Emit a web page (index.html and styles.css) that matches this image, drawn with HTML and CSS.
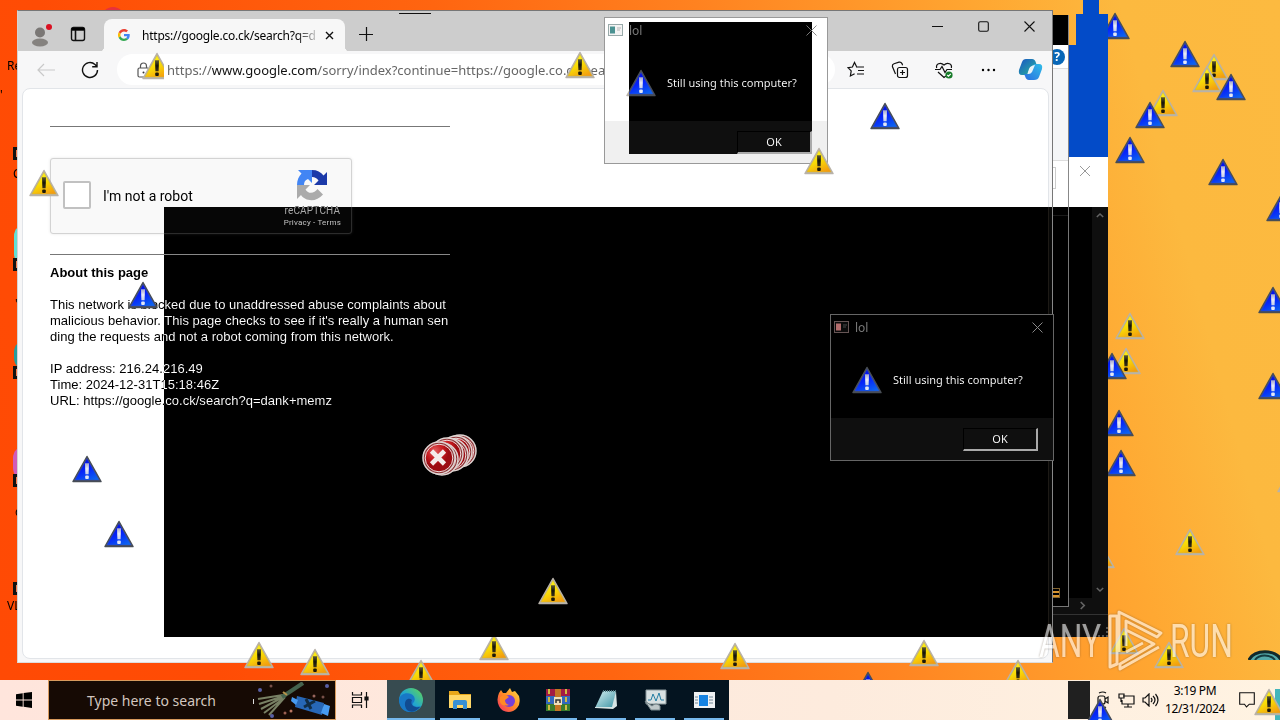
FILE: index.html
```html
<!DOCTYPE html>
<html lang="en">
<head>
  <meta charset="UTF-8" />
  <title>Desktop</title>
  <link rel="stylesheet" href="styles.css">
</head>
<body>
  <svg width="0" height="0" class="defs">
    <defs>
      <linearGradient id="gold" x1=".3" y1="0" x2=".8" y2="1">
        <stop offset="0" stop-color="#fff81c"/><stop offset=".5" stop-color="#f8d806"/><stop offset="1" stop-color="#f39a10"/>
      </linearGradient>
      <linearGradient id="mark" x1="0" y1="0" x2="0" y2="1">
        <stop offset="0" stop-color="#5e5a30"/><stop offset=".5" stop-color="#15130a"/><stop offset="1" stop-color="#383018"/>
      </linearGradient>
      <radialGradient id="red" cx=".35" cy=".25"><stop offset="0" stop-color="#e06060"/><stop offset=".6" stop-color="#c71b20"/><stop offset="1" stop-color="#9d0c12"/></radialGradient>
      <linearGradient id="edgeg" x1="0" y1="1" x2="1" y2="0"><stop offset="0" stop-color="#126dc5"/><stop offset=".5" stop-color="#22a7ce"/><stop offset="1" stop-color="#65d94b"/></linearGradient>
      <linearGradient id="fox" x1="1" y1="0" x2="0" y2="1"><stop offset="0" stop-color="#ffe14a"/><stop offset=".5" stop-color="#ff8a26"/><stop offset="1" stop-color="#f42b68"/></linearGradient>
      <linearGradient id="cop" x1="0" y1="0" x2="1" y2="1"><stop offset="0" stop-color="#1b55c4"/><stop offset="1" stop-color="#28b99c"/></linearGradient>
      <linearGradient id="cop2" x1="0" y1="1" x2="1" y2="0"><stop offset="0" stop-color="#2b6de0"/><stop offset="1" stop-color="#30bde8"/></linearGradient>
      <linearGradient id="note" x1="0" y1="0" x2="1" y2="1"><stop offset="0" stop-color="#d8f1f2"/><stop offset="1" stop-color="#3b93a4"/></linearGradient>
      <symbol id="warn" viewBox="0 0 30 28">
        <path d="M15 1.500 29 26.500H1Z" fill="#bdb6a8" stroke="#b8b2aa" stroke-width="1.500" stroke-linejoin="round"/>
        <path d="M15 3.500 27.200 25H2.800Z" fill="url(#gold)" stroke="#c9b04e" stroke-width=".5"/>
        <path d="M13 8.300h4l-.4 10.900h-3.200Z" fill="url(#mark)"/>
        <rect x="13.200" y="20.500" width="3.600" height="3.400" rx="1" fill="#1c180a"/>
      </symbol>
      <symbol id="error" viewBox="0 0 34 34">
        <circle cx="17" cy="17" r="16" fill="#8c3436" stroke="#dfd4d2" stroke-width="1.500"/>
        <circle cx="17" cy="17" r="13.800" fill="url(#red)" stroke="#f0dcdc" stroke-width="1"/>
        <path d="m9.500 10 13 13M22.500 10l-13 13" stroke="#f4eceb" stroke-width="4.600"/>
      </symbol>
    </defs>
  </svg>

  <div class="desktop">
    <!-- desktop icons peeking out on the left -->
    <i class="blob pink" style="left:101px;top:7px"></i>
    <i class="blob cyan" style="left:14px;top:224px"></i>
    <i class="blob teal" style="left:14px;top:340px"></i>
    <i class="blob violet" style="left:13px;top:446px"></i>
    <i class="shortcut" style="left:13px;top:147px"></i>
    <i class="shortcut" style="left:13px;top:258px"></i>
    <i class="shortcut" style="left:13px;top:366px"></i>
    <i class="shortcut" style="left:13px;top:474px"></i>
    <i class="shortcut" style="left:13px;top:582px"></i>
    <span class="icon-label" style="left:7px;top:58px">Re</span>
    <span class="icon-label" style="left:0px;top:87px">'</span>
    <span class="icon-label" style="left:13px;top:166px">C</span>
    <span class="icon-label" style="left:15px;top:296px">'</span>
    <span class="icon-label" style="left:15px;top:504px">c</span>
    <span class="icon-label" style="left:7px;top:598px">VL</span>

    <svg class="warn blue" style="left:1100px;top:12px"><use href="#warn"/></svg>
    <svg class="warn" style="left:1111px;top:347px"><use href="#warn"/></svg>
    <svg class="warn blue" style="left:1097px;top:352px"><use href="#warn"/></svg>
    <svg class="warn blue" style="left:1104px;top:409px"><use href="#warn"/></svg>
    <svg class="warn blue" style="left:1106px;top:449px"><use href="#warn"/></svg>
    <svg class="warn" style="left:1085px;top:541px"><use href="#warn"/></svg>
    <svg class="warn blue" style="left:853px;top:671px"><use href="#warn"/></svg>
    <svg class="bin" style="left:1248px;top:650px" width="34" height="10"><path d="M1 10C5-1 29-1 33 10" fill="#54a9a9" stroke="#10292c" stroke-width="3"/><path d="M7 10c4-6 15-6 20 0" fill="none" stroke="#143b40" stroke-width="2"/></svg>

    <div class="trail t1"></div>
    <div class="trail t2"></div>
    <div class="trail t3"></div>

    <div class="window listing">
      <svg class="close" width="12" height="12" viewBox="0 0 12 12"><path d="m1 1 10 10M11 1 1 11" stroke="#999" fill="none"/></svg>
      <div class="scroll-v">
        <svg width="8" height="7" viewBox="0 0 10 8"><path d="m1 6 4-4 4 4" stroke="#9b9b9b" stroke-width="1.800" fill="none"/></svg>
        <svg width="8" height="7" viewBox="0 0 10 8"><path d="m1 2 4 4 4-4" stroke="#9b9b9b" stroke-width="1.800" fill="none"/></svg>
      </div>
      <div class="scroll-h"><svg width="7" height="9" viewBox="0 0 8 10"><path d="m2 1 4 4-4 4" stroke="#9b9b9b" stroke-width="1.800" fill="none"/></svg></div>
      <div class="grip"></div>
    </div>

    <div class="window explorer">
      <div class="explorer-title"></div>
      <div class="explorer-menu"><span class="help">?</span></div>
      <div class="explorer-ribbon"></div>
      <div class="explorer-address"><i></i></div>
      <div class="explorer-body"></div>
      <i class="view-icon"></i>
    </div>

    <div class="window browser">
      <div class="tabs">
        <svg class="profile" width="24" height="24" viewBox="0 0 24 24"><circle cx="11" cy="9.500" r="5" fill="#7a7775"/><ellipse cx="11" cy="19.500" rx="8" ry="4" fill="#85827f"/><circle cx="20" cy="4" r="3" fill="#da1021"/></svg>
        <svg class="workspace" width="16" height="16" viewBox="0 0 16 16"><rect x="1.500" y="1.500" width="13" height="13" rx="2" fill="none" stroke="#111" stroke-width="1.400"/><path d="M1.500 4h13M5.500 4v10" stroke="#111" stroke-width="1.600"/><path d="M2 2h12v2H2z"/></svg>
        <div class="tab">
          <svg width="12" height="12" viewBox="0 0 48 48"><path fill="#EA4335" d="M24 9.500c3.500 0 6.700 1.200 9.200 3.600l6.900-6.900C35.900 2.400 30.500 0 24 0 14.600 0 6.500 5.400 2.600 13.200l8 6.200C12.400 13.700 17.700 9.500 24 9.500z"/><path fill="#4285F4" d="M47 24.500c0-1.600-.2-3.100-.4-4.500H24v9h12.900c-.6 3-2.300 5.500-4.800 7.200l7.700 6C44.400 38 47 31.800 47 24.500z"/><path fill="#FBBC05" d="M10.500 28.600a14 14 0 0 1 0-9.200l-8-6.200a24 24 0 0 0 0 21.600z"/><path fill="#34A853" d="M24 48c6.500 0 11.900-2.100 15.900-5.800l-7.700-6c-2.200 1.500-5 2.300-8.200 2.300-6.300 0-11.600-4.200-13.500-9.900l-8 6.200C6.500 42.600 14.600 48 24 48z"/></svg>
          <span class="tab-title">https://google.co.ck/search?q=d</span>
          <svg width="9" height="9" viewBox="0 0 9 9"><path d="m1 1 7 7M8 1 1 8" stroke="#111" stroke-width="1.400"/></svg>
        </div>
        <svg class="new-tab" width="14" height="14" viewBox="0 0 14 14"><path d="M7.500 0v14M0 7.500h14" stroke="#111" stroke-width="1.200"/></svg>
        <div class="controls">
          <svg width="11" height="11" viewBox="0 0 11 11"><path d="M0 5.500h11" stroke="#111"/></svg>
          <svg width="11" height="11" viewBox="0 0 11 11"><rect x=".7" y=".7" width="9.600" height="9.600" rx="1.500" fill="none" stroke="#111" stroke-width="1.100"/></svg>
          <svg width="11" height="11" viewBox="0 0 11 11"><path d="m.5.500 10 10m0-10-10 10" stroke="#111" stroke-width="1.100"/></svg>
        </div>
      </div>
      <div class="toolbar">
        <svg class="back" width="18" height="14" viewBox="0 0 18 14"><path d="M18 7H1m6-6L1 7l6 6" fill="none" stroke="#c9c9c9" stroke-width="1.200"/></svg>
        <svg class="reload" width="18" height="18" viewBox="0 0 18 18"><path d="M16.500 9a7.500 7.500 0 1 1-2.500-5.600L16 5.500M16 1v4.800h-4.800" fill="none" stroke="#111" stroke-width="1.400"/></svg>
        <div class="address">
          <svg width="13" height="16" viewBox="0 0 13 16"><rect x="1" y="6" width="11" height="9" rx="1.500" fill="none" stroke="#555" stroke-width="1.200"/><path d="M3.500 6V4a3 3 0 0 1 6 0v2" fill="none" stroke="#555" stroke-width="1.200"/><circle cx="6.500" cy="10.500" r="1" fill="#333"/></svg>
          <span class="url">https://<b>www.google.com</b>/sorry/index?continue=https://google.co.ck/search</span>
        </div>
        <div class="actions">
          <svg width="18" height="18" viewBox="0 0 18 18" fill="none" stroke="#111" stroke-width="1.200"><path d="M9.500 5.500 7.500 1.500 5.400 6 1 6.700l3.200 3.200L3.400 15l4.200-2.300M9 6h8M11 9.500h6M10 13h7"/></svg>
          <svg width="18" height="18" viewBox="0 0 18 18" fill="none" stroke="#111" stroke-width="1.200"><rect x="6.500" y="6.500" width="10" height="10" rx="2"/><path d="M11.500 9v5M9 11.500h5M4.500 13 1.400 5.500Q1 3.500 3 2.700L8 1.200q2-.5 3 1.400l.6 1.600"/></svg>
          <svg width="18" height="18" viewBox="0 0 18 18" fill="none" stroke="#111" stroke-width="1.200"><path d="M1.700 7C.5 3 5.500.5 9 4c3.500-3.500 8.500-1 7.300 3M0 8.500h5l2-3 3 6 2-3h5M3 11l6 5.500 2-1.500"/><circle cx="14" cy="14" r="3.600" fill="#187c2a" stroke="none"/><path d="m12.300 14 1.200 1.200 2.300-2.300" stroke="#fff"/></svg>
          <svg width="18" height="18" viewBox="0 0 18 18"><circle cx="4" cy="9" r="1.200"/><circle cx="9.500" cy="9" r="1.200"/><circle cx="15" cy="9" r="1.200"/></svg>
          <svg class="copilot" width="25" height="23" viewBox="0 0 25 23"><path d="M8 1h6q3 0 4 4l1 3h-4q-3 0-4 3l-2 6H4Q0 17 1 12L4 4q1-3 4-3Z" fill="url(#cop)"/><path d="M17 22h-6q-3 0-4-4l-1-2h3q3 0 4-3l3-7h5q4 0 3 5l-3 8q-1 3-5 3Z" fill="url(#cop2)"/><path d="m10 15 3-6q1-2 4-2l-3 7q-1 2-4 2Z" fill="#e9f4f8"/></svg>
        </div>
      </div>
      <div class="page">
        <hr>
        <div class="captcha">
          <span class="checkbox"></span>
          <span class="robot">I'm not a robot</span>
          <div class="brand">
            <svg width="32" height="32" viewBox="0 0 32 32"><path d="M16 1c5 0 9 2 11.500 5.500L31 3v13H18l4.500-4.500C21 9.500 19 8 16 8Z" fill="#1c3aa9"/><path d="M1 16C1 11 3 7 5.500 4.500L2 1h14v13l-4-4c-3 1-4 3-4 6Z" fill="#4285f4"/><path d="M1 16h13l-4.500 4.500c3 5 9 4 12-.5l5.500 5.500C20 34 9 32 5 26l-4 4Z" fill="#ababab"/></svg>
            <span class="brand-name">reCAPTCHA</span>
            <span class="brand-links">Privacy - Terms</span>
          </div>
        </div>
        <hr>
        <h4>About this page</h4>
        <p>This network is blocked due to unaddressed abuse complaints about<br>malicious behavior. This page checks to see if it's really a human sen<br>ding the requests and not a robot coming from this network.</p>
        <p class="details">IP address: 216.24.216.49<br>Time: 2024-12-31T15:18:46Z<br>URL: https://google.co.ck/search?q=dank+memz</p>
      </div>
    </div>
    <div class="streak"></div>

    <div class="dialog second">
      <div class="dialog-title">
        <svg width="15" height="12" viewBox="0 0 15 12"><rect x=".5" y=".5" width="14" height="11" fill="#f4f4f4" stroke="#9aa"/><rect x="2" y="2.500" width="5" height="7" fill="#4b9292"/><path d="M9 4h4M9 6h3" stroke="#b5b5b5"/></svg>
        <span>lol</span>
        <svg width="11" height="11" viewBox="0 0 11 11"><path d="m.5.500 10 10m0-10-10 10" stroke="#777"/></svg>
      </div>
      <div class="dialog-body"><svg width="30" height="28"><use href="#warn"/></svg><span>Still using this computer?</span></div>
      <div class="dialog-foot"><span class="ok">OK</span></div>
    </div>

    <div class="invert big"></div>

    <div class="dialog first">
      <div class="dialog-title">
        <svg width="15" height="12" viewBox="0 0 15 12"><rect x=".5" y=".5" width="14" height="11" fill="#f4f4f4" stroke="#9aa"/><rect x="2" y="2.500" width="5" height="7" fill="#4b9292"/><path d="M9 4h4M9 6h3" stroke="#b5b5b5"/></svg>
        <span>lol</span>
        <svg width="11" height="11" viewBox="0 0 11 11"><path d="m.5.500 10 10m0-10-10 10" stroke="#888"/></svg>
      </div>
      <div class="dialog-body"><svg width="30" height="28"><use href="#warn"/></svg><span>Still using this computer?</span></div>
      <div class="dialog-foot"><span class="ok">OK</span></div>
    </div>
    <div class="invert small"></div>

    <!-- icon trail left on the screen -->
    <svg class="warn cut-right" style="left:142px;top:52px"><use href="#warn"/></svg>
    <svg class="warn" style="left:29px;top:169px"><use href="#warn"/></svg>
    <svg class="warn" style="left:565px;top:51px"><use href="#warn"/></svg>
    <svg class="warn" style="left:804px;top:147px"><use href="#warn"/></svg>
    <svg class="warn" style="left:538px;top:577px"><use href="#warn"/></svg>
    <svg class="warn" style="left:244px;top:641px"><use href="#warn"/></svg>
    <svg class="warn" style="left:300px;top:648px"><use href="#warn"/></svg>
    <svg class="warn" style="left:406px;top:659px"><use href="#warn"/></svg>
    <svg class="warn cut-top" style="left:479px;top:633px"><use href="#warn"/></svg>
    <svg class="warn" style="left:720px;top:642px"><use href="#warn"/></svg>
    <svg class="warn" style="left:909px;top:639px"><use href="#warn"/></svg>
    <svg class="warn" style="left:1003px;top:659px"><use href="#warn"/></svg>
    <svg class="warn" style="left:1199px;top:53px"><use href="#warn"/></svg>
    <svg class="warn" style="left:1192px;top:65px"><use href="#warn"/></svg>
    <svg class="warn" style="left:1148px;top:89px"><use href="#warn"/></svg>
    <svg class="warn" style="left:1115px;top:312px"><use href="#warn"/></svg>
    <svg class="warn" style="left:1175px;top:528px"><use href="#warn"/></svg>
    <svg class="warn" style="left:1277px;top:465px"><use href="#warn"/></svg>
    <svg class="warn" style="left:1109px;top:627px"><use href="#warn"/></svg>
    <svg class="warn" style="left:1154px;top:641px"><use href="#warn"/></svg>
    <svg class="warn blue" style="left:870px;top:102px"><use href="#warn"/></svg>
    <svg class="warn blue" style="left:1170px;top:40px"><use href="#warn"/></svg>
    <svg class="warn blue" style="left:1216px;top:73px"><use href="#warn"/></svg>
    <svg class="warn blue" style="left:1135px;top:101px"><use href="#warn"/></svg>
    <svg class="warn blue" style="left:1115px;top:136px"><use href="#warn"/></svg>
    <svg class="warn blue" style="left:1208px;top:158px"><use href="#warn"/></svg>
    <svg class="warn blue" style="left:1266px;top:194px"><use href="#warn"/></svg>
    <svg class="warn blue" style="left:1258px;top:286px"><use href="#warn"/></svg>
    <svg class="warn blue" style="left:1258px;top:372px"><use href="#warn"/></svg>
    <svg class="warn blue" style="left:128px;top:281px"><use href="#warn"/></svg>
    <svg class="warn blue" style="left:72px;top:455px"><use href="#warn"/></svg>
    <svg class="warn blue" style="left:104px;top:520px"><use href="#warn"/></svg>

    <svg class="error" style="left:443px;top:433px"><use href="#error"/></svg>
    <svg class="error" style="left:439px;top:434px"><use href="#error"/></svg>
    <svg class="error" style="left:435px;top:437px"><use href="#error"/></svg>
    <svg class="error" style="left:430px;top:436px"><use href="#error"/></svg>
    <svg class="error" style="left:425px;top:441px"><use href="#error"/></svg>
    <svg class="error" style="left:422px;top:440px"><use href="#error"/></svg>

    <div class="watermark">
      <span>ANY</span>
      <svg width="58" height="64" viewBox="0 0 58 64" fill="none" stroke="#fff" stroke-width="3" stroke-linejoin="round"><path d="M12 43V3l42 21-4 4L19 12v25M19 34V21l28 14-34 20v5l39-22M3 7v51l7-3V7ZM19 43l17-9"/></svg>
      <span>RUN</span>
    </div>
  </div>

  <div class="taskbar">
    <svg class="start" width="16" height="16" viewBox="0 0 16 16"><path d="M0 2.300 6.700 1.300v6.300H0ZM7.600 1.100 16 0v7.600H7.600ZM0 8.500h6.700v6.300L0 13.800ZM7.600 8.500H16V16l-8.400-1.200Z"/></svg>
    <div class="search">
      <span>Type here to search</span>
      <svg width="82" height="36" viewBox="0 0 82 36">
        <path d="M1.500 17v5" stroke="#ddd"/>
        <g stroke="#788064" stroke-width="2"><path d="M6 17 31 13M7 22l25-8M9 27l22-12M12 31l20-15M17 33l16-18"/><path d="M30 15 51 1" stroke="#45634e" stroke-width="4"/><path d="m35 13-4-3" stroke="#b69349"/></g>
        <path d="m45 14 27 7-2 12-27-8Z" fill="#2767b6"/><path d="m40 15 6 3-2 5-5-4ZM72 22l6 2-2 10-7-3Z" fill="#489bf0"/><path d="m54 17 5 10m4-8-11 6" stroke="#112d46" stroke-width="3"/>
        <g fill="#5960a5"><circle cx="8" cy="8" r="2"/><circle cx="75" cy="4" r="2"/><circle cx="20" cy="34" r="2"/><circle cx="33" cy="31" r="1.500" fill="#9b6053"/><circle cx="19" cy="4" r="1.500" fill="#775048"/><circle cx="62" cy="14" r="1.500" fill="#98665e"/><circle cx="71" cy="15" r="1.500" fill="#775048"/><circle cx="39" cy="29" r="1.500" fill="#b97762"/></g>
      </svg>
    </div>
    <svg class="taskview" width="18" height="18" viewBox="0 0 18 18" fill="none" stroke="#111" stroke-width="1.200"><path d="M1.500 1v3h9V1M1.500 17v-3h9v3M1.500 6.500h9v5h-9ZM15.500 1v16"/><path d="M14 6h3v3h-3z" fill="#111"/></svg>
    <div class="apps">
      <span class="app active"><svg width="24" height="24" viewBox="0 0 24 24"><circle cx="12" cy="12" r="12" fill="url(#edgeg)"/><path d="M0 12C1 6 7 4 12 6c4 2 5 6 2 9-2 3 3 5 8 3-5 8-18 8-21-1Z" fill="#1878c7"/><path d="M8 22c-5-7 0-14 5-10-2 4 1 8 8 7-4 5-9 6-13 3Z" fill="#114b91"/></svg></span>
      <span class="app open"><svg width="22" height="20" viewBox="0 0 22 20"><path d="M0 1h9l2 3h11v14H0Z" fill="#e8a71b"/><path d="M0 5h22v13H0Z" fill="#ffd768"/><path d="M4 19v-7q0-2 2-2h10q2 0 2 2v7h-4v-4H8v4Z" fill="#3790d5"/></svg></span>
      <span class="app"><svg width="24" height="24" viewBox="0 0 24 24"><path d="M2 5l2-3 2 3 3 0 4-5 2 4 3-1 4 5q2 8-2 12c-5 6-15 5-18-2Q-1 12 2 5Z" fill="url(#fox)"/><circle cx="12" cy="13" r="6" fill="#7540d8"/><path d="M3 9q5-4 9 0l-4 3q0 4 4 5-7 2-9-3Z" fill="#ff8a25"/></svg></span>
      <span class="app open"><svg width="24" height="22" viewBox="0 0 24 22"><path d="M0 0h24v7H0Z" fill="#a31b43"/><path d="M0 7h24v8H0Z" fill="#3268bd"/><path d="M0 15h24v7H0Z" fill="#397c2d"/><path d="M3 0v22M20 0v22" stroke="#d0bc43" stroke-width="2" stroke-dasharray="5 3"/><path d="M9 0h6v22H9Z" fill="#c37524"/><rect x="8" y="8" width="8" height="8" fill="#eee0bb"/><path d="M10 14v-3h4v3" fill="none" stroke="#333" stroke-width="1.500"/></svg></span>
      <span class="app open"><svg width="24" height="22" viewBox="0 0 24 22"><path d="M9 2h13l-3 17H1Z" fill="url(#note)"/><path d="m22 2 1 15-4 3L1 19v-1h17Z" fill="#d7e5e5"/><path d="M9 2h13" stroke="#557c82" stroke-width="2" stroke-dasharray="1 1"/></svg></span>
      <span class="app open"><svg width="23" height="22" viewBox="0 0 23 22"><path d="M2 1h20v14H2Z" fill="#d8e1e2" stroke="#8a979b"/><path d="M4 11h3l2-6 3 7 3-8 2 7h3" fill="none" stroke="#267fa3"/><path d="m1 12 7 5q4-4 8 0v4H7Z" fill="#bfc8c9" stroke="#77878b"/></svg></span>
      <span class="app open"><svg width="21" height="16" viewBox="0 0 21 16"><rect width="21" height="16" fill="#eef1f3"/><rect x="5" y="3" width="9" height="11" fill="#1683e2"/><path d="M1 5h3M1 8h3M1 11h3M15 5h4M15 8h4M15 11h4" stroke="#718796"/></svg></span>
    </div>
    <div class="tray">
      <span class="patch"></span>
      <svg class="meet" width="13" height="18" viewBox="0 0 13 18" fill="none" stroke="#111" stroke-width="1.200"><rect x="1" y="5" width="7" height="8" rx="2"/><path d="m8 8 3-2v6l-3-2M2 2q4-2 7 0M2 16q4 2 7 0"/></svg>
      <svg class="net" width="17" height="15" viewBox="0 0 17 15" fill="none" stroke="#111" stroke-width="1.200"><path d="M5 3h11v8H4V7M10 11v3M6 14h8M1 1h5v4H1ZM3 5v4"/></svg>
      <svg class="sound" width="17" height="14" viewBox="0 0 17 14" fill="none" stroke="#111" stroke-width="1.200"><path d="M1 5v4h2l4 4V1L3 5ZM9 5q2 2 0 4M11 3q4 4 0 8M13.500 1q5 6 0 12"/></svg>
      <div class="clock"><span>3:19 PM</span><span>12/31/2024</span></div>
      <svg class="notice" width="16" height="16" viewBox="0 0 16 16" fill="none" stroke="#111" stroke-width="1.100"><path d="M.7.700h14.600v11.500h-5L7.500 15l-2-2.800H.7Z"/></svg>
    </div>
    <i class="corner"></i>
    <svg class="warn blue" style="left:1085px;top:18px"><use href="#warn"/></svg>
    <svg class="warn" style="left:1254px;top:8px"><use href="#warn"/></svg>
  </div>
</body>
</html>
```
FILE: styles.css
```css
* {
  box-sizing: border-box;
}
body {
  margin: 0;
  width: 1280px;
  height: 720px;
  overflow: hidden;
  font-family: "Noto Sans", "Open Sans", sans-serif;
  font-size: 12px;
  color: #000;
}
svg {
  display: block;
  flex: none;
}
.defs {
  position: absolute;
}
.desktop {
  position: relative;
  height: 680px;
  overflow: hidden;
  isolation: isolate;
  background: linear-gradient(75deg, #ff4a05 0%, #ff4c05 15%, #ff6510 42%, #ff8220 60%, #ffa832 80%, #fcb93f 89%, #fcba40 100%);
}
.blob {
  position: absolute;
  width: 24px;
  height: 30px;
  border-radius: 12px;
}
.pink { background: #e7323c; }
.cyan { background: #63dfd5; height: 42px; }
.teal { background: #269d9e; }
.violet { background: #d15bb8; height: 34px; }
.shortcut {
  position: absolute;
  width: 9px;
  height: 13px;
  border: 3px solid #111;
  background: #f27b4d;
}
.icon-label {
  position: absolute;
  line-height: 16px;
}
.warn {
  position: absolute;
  width: 30px;
  height: 28px;
}
.blue {
  filter: invert(1);
}
.cut-right { clip-path: inset(0 8px 0 0); }
.cut-top { clip-path: inset(4px 0 0 0); }
.error {
  position: absolute;
  width: 34px;
  height: 36px;
}
.bin, .trail, .window, .dialog, .invert, .streak, .watermark {
  position: absolute;
}
.trail { background: #034bc8; }
.t1 { left: 1083px; top: 0; width: 16px; height: 14px; }
.t2 { left: 1076px; top: 14px; width: 32px; height: 31px; }
.t3 { left: 1068px; top: 45px; width: 40px; height: 112px; }
.streak {
  left: 399px;
  top: 13px;
  width: 32px;
  height: 1px;
  background: #111;
}

/* windows behind the browser */
.listing {
  left: 700px;
  top: 157px;
  width: 408px;
  height: 480px;
  background: #fff;
}
.listing .close {
  position: absolute;
  right: 17px;
  top: 8px;
}
.scroll-v {
  display: flex;
  flex-direction: column;
  justify-content: space-between;
  width: 16px;
  height: 391px;
  margin: 50px 0 0 auto;
  padding: 5px 4px;
  background: #f0f0f0;
}
.scroll-h {
  height: 16px;
  padding: 3px 22px 0;
  background: #f0f0f0;
  display: flex;
  justify-content: flex-end;
}
.grip {
  height: 23px;
  background: #f0f0f0;
  border-top: 1px solid #ccc;
}
.grip::after {
  content: "";
  display: block;
  width: 8px;
  height: 8px;
  margin: 12px 0 0 auto;
  border-right: 2px dotted #aaa;
  border-bottom: 2px dotted #aaa;
}
.explorer {
  left: 700px;
  top: 15px;
  width: 369px;
  height: 592px;
  background: #fff;
  border-right: 1px solid #888;
  border-bottom: 1px solid #888;
}
.explorer-title {
  height: 30px;
  background: #000;
}
.explorer-menu {
  height: 24px;
  border-bottom: 1px solid #ddd;
  display: flex;
  justify-content: flex-end;
  align-items: center;
  padding-right: 3px;
}
.help {
  width: 16px;
  height: 16px;
  border-radius: 8px;
  background: #0867b7;
  color: #fff;
  font-weight: bold;
  line-height: 16px;
  text-align: center;
}
.explorer-ribbon {
  height: 92px;
  background: #f5f6f7;
  border-bottom: 1px solid #ddd;
}
.explorer-address {
  height: 55px;
  padding: 6px 12px 0 0;
  border-bottom: 1px solid #e5e5e5;
}
.explorer-address i {
  display: block;
  height: 22px;
  border: 1px solid #ccc;
}
.view-icon {
  position: absolute;
  right: 8px;
  bottom: 8px;
  width: 12px;
  height: 10px;
  border: 1px solid #7d9bd0;
  background: repeating-linear-gradient(#fff 0 2px, #286bd0 2px 4px);
}

/* browser */
.browser {
  left: 17px;
  top: 10px;
  width: 1036px;
  height: 653px;
  display: flex;
  flex-direction: column;
  background: #f7f7f8;
  border: 1px solid #777;
  border-left-color: #d4d4d4;
  border-bottom-color: #ddd;
}
.tabs {
  height: 40px;
  display: flex;
  background: #cdcdcd;
}
.profile { margin: 12px 0 0 11px; }
.workspace { margin: 15px 0 0 17px; }
.tab {
  display: flex;
  align-items: center;
  width: 241px;
  height: 33px;
  margin: 8px 0 0 18px;
  padding: 0 11px 1px 14px;
  border-radius: 8px 8px 0 0;
  background: #f7f7f7;
  position: relative;
}
.tab::before, .tab::after {
  content: "";
  position: absolute;
  bottom: 0;
  width: 6px;
  height: 6px;
}
.tab::before {
  left: -6px;
  background: radial-gradient(circle at 0 0, transparent 6px, #f7f7f7 6.500px);
}
.tab::after {
  right: -6px;
  background: radial-gradient(circle at 100% 0, transparent 6px, #f7f7f7 6.500px);
}
.tab-title {
  width: 174px;
  margin: 0 9px 0 12px;
  white-space: nowrap;
  font-size: 12px;
  letter-spacing: -.22px;
  -webkit-mask-image: linear-gradient(90deg, #000 88%, rgba(0,0,0,.2));
  mask-image: linear-gradient(90deg, #000 88%, rgba(0,0,0,.2));
}
.new-tab { margin: 16px 0 0 14px; }
.controls {
  display: flex;
  gap: 35px;
  margin: 10px 17px 0 auto;
}
.toolbar {
  height: 37px;
  display: flex;
  align-items: center;
}
.back { margin-left: 19px; }
.reload { margin-left: 26px; }
.address {
  display: flex;
  align-items: center;
  width: 718px;
  height: 31px;
  margin-left: 18px;
  padding-left: 20px;
  border-radius: 16px;
  background: #fff;
  font-size: 13px;
  color: #666;
}
.url {
  margin-left: 17px;
  letter-spacing: -.01px;
  white-space: nowrap;
}
.url b {
  font-weight: normal;
  color: #111;
}
.actions {
  display: flex;
  align-items: center;
  gap: 26px;
  margin-left: 12px;
}
.copilot { margin-left: -5px; }
.page {
  flex: 1;
  margin: 0 3px 3px 4px;
  padding: 37px 0 0 27px;
  background: #fff;
  border: 1px solid #e2e5e9;
  border-radius: 8px;
  font: 13px/16px "Liberation Sans", Arial, sans-serif;
}
.page hr {
  width: 400px;
  height: 1px;
  margin: 0;
  border: 0;
  background: #777;
}
.captcha {
  display: flex;
  width: 302px;
  height: 76px;
  margin: 31px 0 20px;
  padding: 0 10px 0 12px;
  align-items: center;
  background: #f9f9f9;
  border: 1px solid #d3d3d3;
  border-radius: 3px;
  box-shadow: 0 0 3px rgba(0,0,0,.1);
  font-family: Roboto, sans-serif;
}
.checkbox {
  width: 28px;
  height: 28px;
  margin-bottom: 2px;
  border: 2px solid #c1c1c1;
  border-radius: 2px;
  background: #fff;
}
.robot {
  margin-left: 12px;
  font-size: 14px;
}
.brand {
  display: flex;
  flex-direction: column;
  align-items: center;
  margin-left: auto;
  padding-top: 6px;
  color: #333;
}
.brand-name {
  font-size: 10px;
  line-height: 13px;
  margin-top: 3px;
  letter-spacing: .2px;
  color: #555;
}
.brand-links {
  font-size: 8px;
  line-height: 12px;
  letter-spacing: .2px;
}
.page h4 {
  margin: 10px 0 16px;
  font-size: 13px;
  line-height: 16px;
}
.page p {
  margin: 0 0 16px;
  letter-spacing: .02px;
  white-space: nowrap;
}

/* message boxes */
.dialog {
  display: flex;
  flex-direction: column;
  width: 224px;
  height: 147px;
  background: #fff;
  border: 1px solid #999;
}
.first { left: 604px; top: 17px; }
.second { left: 830px; top: 314px; }
.dialog-title {
  height: 24px;
  display: flex;
  align-items: center;
  padding: 0 10px 0 3px;
  color: #888;
}
.dialog-title span {
  margin: 0 auto 0 6px;
}
.dialog-body {
  flex: 1;
  display: flex;
  align-items: center;
  padding: 4px 0 0 21px;
  white-space: nowrap;
}
.dialog-body svg {
  margin-bottom: 2px;
}
.dialog-body span {
  margin-left: 11px;
  margin-bottom: 3px;
  font-size: 11px;
}
.dialog-foot {
  height: 42px;
  padding: 10px 15px 0;
  background: #f0f0f0;
  display: flex;
  justify-content: flex-end;
}
.ok {
  width: 75px;
  height: 23px;
  font-size: 11px;
  line-height: 20px;
  text-align: center;
  border: 1px solid #fff;
  border-right: 2px solid #555;
  border-bottom: 2px solid #555;
}
.invert {
  background: #fff;
  mix-blend-mode: difference;
}
.big { left: 164px; top: 207px; width: 944px; height: 430px; }
.small { left: 629px; top: 22px; width: 183px; height: 132px; }

.watermark {
  left: 1039px;
  top: 609px;
  display: flex;
  align-items: center;
  gap: 5px;
  color: #fff;
  opacity: .6;
  font: 46px/64px Roboto, sans-serif;
  filter: drop-shadow(0 0 1px rgba(80,60,40,.7));
}
.watermark span {
  width: 63px;
  display: inline-block;
  transform: scaleX(.69);
  transform-origin: 0 50%;
}

/* taskbar */
.taskbar {
  position: relative;
  display: flex;
  height: 40px;
  overflow: hidden;
  background: linear-gradient(90deg, #ffe5dc, #fdebdd 65%, #fff3e2);
}
.start { margin: 12px 0 0 16px; }
.search {
  display: flex;
  width: 288px;
  height: 40px;
  margin-left: 16px;
  padding: 1px 1px 0 38px;
  border: 1px solid #d89a5d;
  background: #160a04;
  color: #d2c6bf;
  font-size: 14px;
  line-height: 38px;
}
.search span {
  width: 167px;
  white-space: nowrap;
}
.taskview { margin: 11px 0 0 15px; }
.apps {
  display: flex;
  width: 342px;
  margin-left: 18px;
  background: #041420;
}
.app {
  display: flex;
  align-items: center;
  justify-content: center;
  width: 48px;
  height: 40px;
  margin-right: 1px;
  position: relative;
}
.active { background: #374b50; }
.active::after, .open::after {
  content: "";
  position: absolute;
  bottom: 0;
  left: 4px;
  right: 4px;
  height: 2px;
  background: #76b9ed;
}
.active::after { left: 0; right: 0; }
.tray {
  display: flex;
  align-items: center;
  margin-left: auto;
  padding-right: 25px;
}
.patch {
  width: 22px;
  height: 38px;
  background: #202020;
}
.meet { margin-left: 7px; }
.net { margin-left: 8px; }
.sound { margin-left: 7px; }
.clock {
  display: flex;
  flex-direction: column;
  align-items: center;
  width: 60px;
  margin-left: 6px;
  font-size: 12px;
  line-height: 18px;
  letter-spacing: -.4px;
}
.notice { margin-left: 14px; }
.corner {
  position: absolute;
  right: 0;
  top: 9px;
  width: 5px;
  height: 31px;
  background: #43b5bb;
}
```
